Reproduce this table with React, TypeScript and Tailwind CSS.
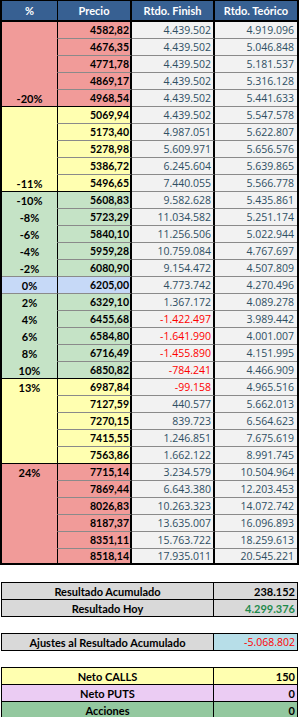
import React from 'react';

type Row = {
  pct: string;
  precio: string;
  fin: string;
  teo: string;
  bg: string;
  pctB: string;
  precioB: string;
};

const RED = 'bg-[#f19b99]';
const YEL = 'bg-[#ffffb0]';
const GRN = 'bg-[#c5e3c6]';
const BLU = 'bg-[#c6d9f7]';

// [pct, precio, finish, teorico]
const raw: [string, string, string, string][] = [
  ['', '4582,82', '4.439.502', '4.919.096'],
  ['', '4676,35', '4.439.502', '5.046.848'],
  ['', '4771,78', '4.439.502', '5.181.537'],
  ['', '4869,17', '4.439.502', '5.316.128'],
  ['-20%', '4968,54', '4.439.502', '5.441.633'],
  ['', '5069,94', '4.439.502', '5.547.578'],
  ['', '5173,40', '4.987.051', '5.622.807'],
  ['', '5278,98', '5.609.971', '5.656.576'],
  ['', '5386,72', '6.245.604', '5.639.865'],
  ['-11%', '5496,65', '7.440.055', '5.566.778'],
  ['-10%', '5608,83', '9.582.628', '5.435.861'],
  ['-8%', '5723,29', '11.034.582', '5.251.174'],
  ['-6%', '5840,10', '11.256.506', '5.022.944'],
  ['-4%', '5959,28', '10.759.084', '4.767.697'],
  ['-2%', '6080,90', '9.154.472', '4.507.809'],
  ['0%', '6205,00', '4.773.742', '4.270.496'],
  ['2%', '6329,10', '1.367.172', '4.089.278'],
  ['4%', '6455,68', '-1.422.497', '3.989.442'],
  ['6%', '6584,80', '-1.641.990', '4.001.007'],
  ['8%', '6716,49', '-1.455.890', '4.151.995'],
  ['10%', '6850,82', '-784.241', '4.466.909'],
  ['13%', '6987,84', '-99.158', '4.965.516'],
  ['', '7127,59', '440.577', '5.662.013'],
  ['', '7270,15', '839.723', '6.564.623'],
  ['', '7415,55', '1.246.851', '7.675.619'],
  ['', '7563,86', '1.662.122', '8.991.745'],
  ['24%', '7715,14', '3.234.579', '10.504.964'],
  ['', '7869,44', '6.643.380', '12.203.453'],
  ['', '8026,83', '10.263.323', '14.072.742'],
  ['', '8187,37', '13.635.007', '16.096.893'],
  ['', '8351,11', '15.763.722', '18.259.613'],
  ['', '8518,14', '17.935.011', '20.545.221'],
];

const groupEnds = [4, 9, 20, 25];

const rows: Row[] = raw.map(([pct, precio, fin, teo], i) => {
  let bg = RED;
  if (i >= 5 && i <= 9) bg = YEL;
  else if (i >= 10 && i <= 14) bg = GRN;
  else if (i === 15) bg = BLU;
  else if (i >= 16 && i <= 20) bg = GRN;
  else if (i >= 21 && i <= 25) bg = YEL;

  let pctB = 'border-b-transparent';
  let precioB = 'border-b-[#8a8a8a]';
  if (groupEnds.includes(i)) {
    pctB = 'border-b-black';
    precioB = 'border-b-black';
  } else if (i === 14 || i === 15) {
    pctB = 'border-b-[#8a8a8a]';
  }
  return { pct, precio, fin, teo, bg, pctB, precioB };
});

const SummaryRow = ({
  label,
  value,
  labelBg,
  valueBg,
  valueCls,
  last,
}: {
  label: string;
  value: string;
  labelBg: string;
  valueBg: string;
  valueCls: string;
  last?: boolean;
}) => (
  <div className={`flex ${last ? 'h-[16px]' : 'h-[17px] border-b border-black'}`}>
    <div className={`w-[212px] border-r border-black ${labelBg} flex items-center justify-center font-bold pt-px`}>
      {label}
    </div>
    <div className={`flex-1 ${valueBg} flex items-center justify-end pr-[2px] pt-px ${valueCls}`}>{value}</div>
  </div>
);

export default function App() {
  return (
    <div
      className="w-[299px] h-[717px] bg-white text-[11px] leading-none text-black overflow-hidden"
      style={{ fontFamily: 'Lato, "Open Sans", Arial, sans-serif' }}
    >
      {/* Main table */}
      <div className="border-x-2 border-t border-b-2 border-black">
        <div className="flex h-[21px] bg-[#376092] text-white font-bold border-b-2 border-black">
          <div className="w-[56px] border-r border-black flex items-center justify-center">%</div>
          <div className="w-[74px] border-r-2 border-black flex items-center justify-center">Precio</div>
          <div className="w-[83px] border-r-2 border-black flex items-center justify-center">Rtdo. Finish</div>
          <div className="flex-1 flex items-center justify-center">Rtdo. Teórico</div>
        </div>
        {rows.map((r, i) => {
          const isLast = i === rows.length - 1;
          const neg = r.fin.startsWith('-');
          return (
            <div key={i} className={`flex ${isLast ? 'h-[14px]' : 'h-[17px]'}`}>
              <div
                className={`w-[56px] border-r border-r-black ${isLast ? '' : `border-b ${r.pctB}`} ${r.bg} flex items-center justify-center font-bold pt-px`}
              >
                {r.pct}
              </div>
              <div
                className={`w-[74px] border-r-2 border-r-black ${isLast ? '' : `border-b ${r.precioB}`} ${r.bg} flex items-center justify-end pr-px font-bold pt-px text-[10.5px]`}
              >
                {r.precio}
              </div>
              <div
                className={`w-[83px] border-r-2 border-r-black ${isLast ? '' : 'border-b border-b-[#8a8a8a]'} bg-[#f2f2f2] flex items-center justify-end pr-[2px] pt-px font-['Open_Sans',sans-serif] text-[10.5px] ${neg ? 'text-[#ff0000]' : 'text-[#2f4f63]'}`}
              >
                {r.fin}
              </div>
              <div
                className={`flex-1 ${isLast ? '' : 'border-b border-b-[#8a8a8a]'} bg-[#f2f2f2] flex items-center justify-end pr-[3px] pt-px font-['Open_Sans',sans-serif] text-[10.5px] text-[#2f4f63]`}
              >
                {r.teo}
              </div>
            </div>
          );
        })}
      </div>

      {/* Resultados */}
      <div className="mt-[17px] mx-px border border-black">
        <SummaryRow label="Resultado Acumulado" value="238.152" labelBg="bg-[#d9d9d9]" valueBg="bg-[#d9d9d9]" valueCls="font-bold text-black" />
        <SummaryRow label="Resultado Hoy" value="4.299.376" labelBg="bg-[#d9d9d9]" valueBg="bg-[#d9d9d9]" valueCls="font-bold text-[#1f8a4c]" last />
      </div>

      <div className="mt-[16px] mx-px border border-black">
        <SummaryRow label="Ajustes al Resultado Acumulado" value="-5.068.802" labelBg="bg-[#d9d9d9]" valueBg="bg-[#b7dee8]" valueCls="font-['Open_Sans',sans-serif] text-[10.5px] text-[#ff0000]" last />
      </div>

      <div className="mt-[16px] mx-px border border-black">
        <SummaryRow label="Neto CALLS" value="150" labelBg="bg-[#ffffb0]" valueBg="bg-[#ffffb0]" valueCls="font-bold" />
        <SummaryRow label="Neto PUTS" value="0" labelBg="bg-[#ebccf3]" valueBg="bg-[#ebccf3]" valueCls="font-bold" />
        <SummaryRow label="Acciones" value="0" labelBg="bg-[#93c89f]" valueBg="bg-[#93c89f]" valueCls="font-bold" last />
      </div>
    </div>
  );
}
